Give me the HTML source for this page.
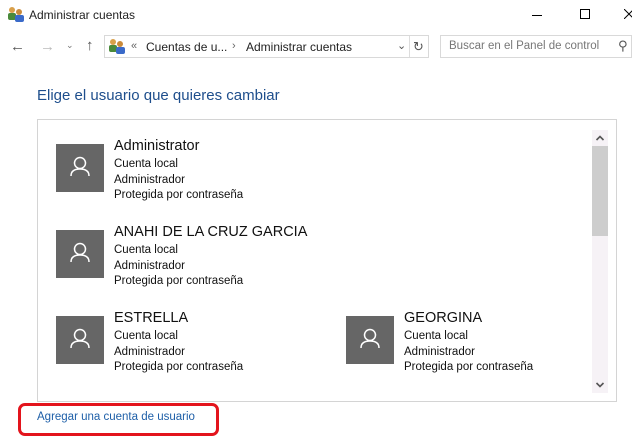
<!DOCTYPE html>
<html><head><meta charset="utf-8"><style>
*{margin:0;padding:0;box-sizing:border-box}
body{width:632px;height:439px;background:#fff;font-family:"Liberation Sans","DejaVu Sans",sans-serif;position:relative;overflow:hidden;color:#000}
.a{position:absolute}
.t{font-size:12px;color:#222}
.av{position:absolute;width:48px;height:48px;background:#666}
.nm{position:absolute;font-size:14.5px;color:#111}
.ln{position:absolute;font-size:11.5px;color:#111;line-height:15.5px}
</style></head><body>
<svg class="a" style="left:7px;top:6px" width="18" height="16"><circle cx="5" cy="4" r="3" fill="#d9a04a"/><rect x="1" y="7" width="8" height="7" rx="2" fill="#4a8a3a"/><circle cx="12" cy="6" r="3" fill="#c98a3a"/><rect x="8" y="9" width="9" height="7" rx="2" fill="#3a6ac9"/></svg>
<div class="a t" style="left:29px;top:8px;font-size:12px">Administrar cuentas</div>
<div class="a" style="left:532px;top:15px;width:10px;height:1px;background:#000"></div>
<div class="a" style="left:580px;top:9px;width:10px;height:10px;border:1px solid #000"></div>
<svg class="a" style="left:624px;top:9px" width="10" height="10"><path d="M0 0L10 10M10 0L0 10" stroke="#000" stroke-width="1"/></svg>
<div class="a" style="left:10px;top:38px;font-size:15px;color:#555">←</div>
<div class="a" style="left:40px;top:38px;font-size:15px;color:#bbb">→</div>
<div class="a" style="left:66px;top:40px;font-size:9px;color:#777">⌄</div>
<div class="a" style="left:86px;top:37px;font-size:15px;color:#555">↑</div>
<div class="a" style="left:104px;top:35px;width:325px;height:23px;border:1px solid #d9d9d9"></div>
<svg class="a" style="left:108px;top:38px" width="18" height="16"><circle cx="5" cy="4" r="3" fill="#d9a04a"/><rect x="1" y="7" width="8" height="7" rx="2" fill="#4a8a3a"/><circle cx="12" cy="6" r="3" fill="#c98a3a"/><rect x="8" y="9" width="9" height="7" rx="2" fill="#3a6ac9"/></svg>
<div class="a t" style="left:131px;top:40px;font-size:11px;color:#666">«</div>
<div class="a t" style="left:146px;top:40px;font-size:12px">Cuentas de u...</div>
<div class="a t" style="left:232px;top:40px;font-size:11px;color:#666">›</div>
<div class="a t" style="left:246px;top:40px;font-size:12px">Administrar cuentas</div>
<div class="a" style="left:397px;top:39px;font-size:11px;color:#555">⌄</div>
<div class="a" style="left:409px;top:36px;width:1px;height:21px;background:#ddd"></div>
<div class="a" style="left:413px;top:39px;font-size:13px;color:#555">↻</div>
<div class="a" style="left:440px;top:35px;width:192px;height:23px;border:1px solid #d9d9d9"></div>
<div class="a" style="left:449px;top:40px;font-size:11.5px;color:#777">Buscar en el Panel de control</div>
<div class="a" style="left:618px;top:38px;font-size:13px;color:#555">⚲</div>
<div class="a" style="left:37px;top:87px;font-size:15px;color:#1e4e8c">Elige el usuario que quieres cambiar</div>
<div class="a" style="left:37px;top:119px;width:580px;height:283px;border:1px solid #d4d4d4"></div>
<div class="a" style="left:592px;top:130px;width:16px;height:263px;background:#f6f2f6"></div>
<div class="a" style="left:592px;top:146px;width:16px;height:90px;background:#cdcdcd"></div>
<svg class="a" style="left:595px;top:134px" width="10" height="8"><path d="M1.5 6L5 2.5L8.5 6" fill="none" stroke="#555" stroke-width="1.6"/></svg>
<svg class="a" style="left:595px;top:381px" width="10" height="8"><path d="M1.5 2L5 5.5L8.5 2" fill="none" stroke="#555" stroke-width="1.6"/></svg>

<div class="av" style="left:56px;top:144px"></div>
<svg class="a" style="left:56px;top:144px" width="48" height="48"><circle cx="24" cy="19" r="5.5" fill="none" stroke="#fff" stroke-width="1.5"/><path d="M15 32 Q15 25 24 25 Q33 25 33 32" fill="none" stroke="#fff" stroke-width="1.5"/></svg>
<div class="nm" style="left:114px;top:138px">Administrator</div>
<div class="ln" style="left:114px;top:157px">Cuenta local<br>Administrador<br>Protegida por contraseña</div>

<div class="av" style="left:56px;top:230px"></div>
<svg class="a" style="left:56px;top:230px" width="48" height="48"><circle cx="24" cy="19" r="5.5" fill="none" stroke="#fff" stroke-width="1.5"/><path d="M15 32 Q15 25 24 25 Q33 25 33 32" fill="none" stroke="#fff" stroke-width="1.5"/></svg>
<div class="nm" style="left:114px;top:224px">ANAHI DE LA CRUZ GARCIA</div>
<div class="ln" style="left:114px;top:243px">Cuenta local<br>Administrador<br>Protegida por contraseña</div>

<div class="av" style="left:56px;top:316px"></div>
<svg class="a" style="left:56px;top:316px" width="48" height="48"><circle cx="24" cy="19" r="5.5" fill="none" stroke="#fff" stroke-width="1.5"/><path d="M15 32 Q15 25 24 25 Q33 25 33 32" fill="none" stroke="#fff" stroke-width="1.5"/></svg>
<div class="nm" style="left:114px;top:310px">ESTRELLA</div>
<div class="ln" style="left:114px;top:329px">Cuenta local<br>Administrador<br>Protegida por contraseña</div>

<div class="av" style="left:346px;top:316px"></div>
<svg class="a" style="left:346px;top:316px" width="48" height="48"><circle cx="24" cy="19" r="5.5" fill="none" stroke="#fff" stroke-width="1.5"/><path d="M15 32 Q15 25 24 25 Q33 25 33 32" fill="none" stroke="#fff" stroke-width="1.5"/></svg>
<div class="nm" style="left:404px;top:310px">GEORGINA</div>
<div class="ln" style="left:404px;top:329px">Cuenta local<br>Administrador<br>Protegida por contraseña</div>

<div class="a" style="left:37px;top:411px;font-size:11.5px;color:#1e5fa8">Agregar una cuenta de usuario</div>
<div class="a" style="left:18px;top:403px;width:201px;height:33px;border:3px solid #e3141c;border-radius:7px"></div>
</body></html>
